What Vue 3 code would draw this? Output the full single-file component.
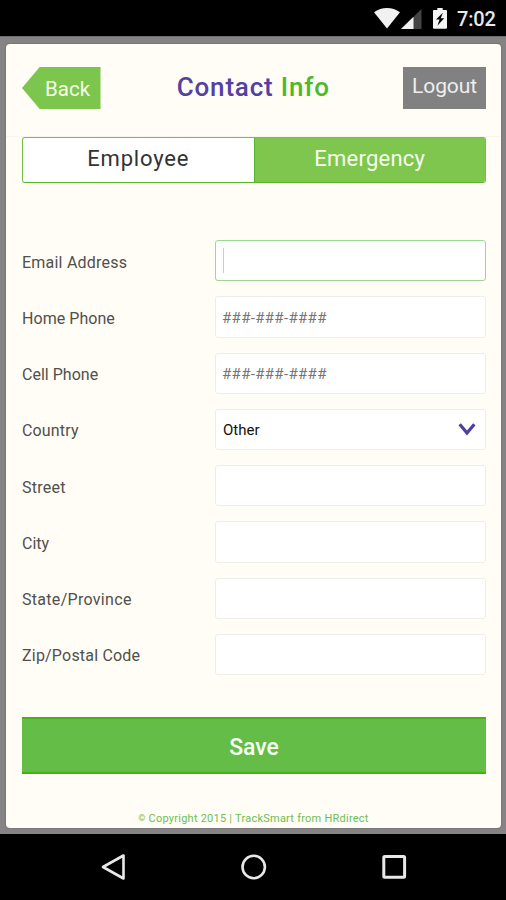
<script setup>
import { ref } from 'vue'

const fields = ref([
  { label: 'Email Address', ls: 0.22, focused: true },
  { label: 'Home Phone', ls: 0.05, mask: '###-###-####' },
  { label: 'Cell Phone', ls: 0.02, mask: '###-###-####' },
  { label: 'Country', ls: 0.15, value: 'Other' },
  { label: 'Street', ls: 0.25 },
  { label: 'City', ls: 0 },
  { label: 'State/Province', ls: 0.3 },
  { label: 'Zip/Postal Code', ls: 0.2 },
])
</script>

<template>
  <div class="screen">
    <div class="status">
      <svg class="wifi" width="26" height="21" viewBox="0 0 26 21"><path d="M0 4.3C7.5-1.4 18.500-1.400 26 4.300L13 20.500Z" fill="#f1f1f1" /></svg>
      <svg class="signal" width="21" height="20" viewBox="0 0 21 20"><path d="M20.500 0V20H0Z" fill="#444" /><path d="M12.500 7.800V20H0Z" fill="#f1f1f1" /></svg>
      <svg class="battery" width="14" height="21" viewBox="0 0 14 21"><path d="M4.300 0h5.400v2H13q1 0 1 1v16.800q0 1-1 1H1q-1 0-1-1V3q0-1 1-1h3.300Z" fill="#f4f4f4" /><path d="M9.800 4.800 3 11.500h3.600L4.400 17.800 11.200 10.200H7.800Z" fill="#000" /></svg>
      <span class="time">7:02</span>
    </div>
    <div class="backdrop">
      <main class="card">
        <header class="header">
          <button class="back"><span>Back</span></button>
          <h1 class="title"><span class="purple">Contact</span> Info</h1>
          <button class="logout"><span>Logout</span></button>
        </header>
        <div class="tabs">
          <div class="tab"><span>Employee</span></div>
          <div class="tab active"><span>Emergency</span></div>
        </div>
        <div class="form">
          <div v-for="f in fields" :key="f.label" class="row">
            <span class="label" :style="{ letterSpacing: f.ls + 'px' }">{{ f.label }}</span>
            <div class="input" :class="{ focused: f.focused }">
              <i v-if="f.focused" class="caret"></i>
              <span v-if="f.mask" class="mask">{{ f.mask }}</span>
              <template v-if="f.value">
                <span class="value">{{ f.value }}</span>
                <svg class="chevron" width="18" height="13" viewBox="0 0 18 13"><path d="M1.700 1.200 9 10l7.300-8.800" fill="none" stroke="#4f3fa0" stroke-width="3.200" /></svg>
              </template>
            </div>
          </div>
        </div>
        <button class="save">Save</button>
        <footer class="footer"><small class="copy">©</small> Copyright 2015 | TrackSmart from HRdirect</footer>
      </main>
    </div>
    <nav class="nav">
      <svg width="28" height="30" viewBox="0 0 28 30"><path d="M24.500 3.500V26.500L4 15Z" fill="none" stroke="#e8e8e8" stroke-width="2.600" stroke-linejoin="round" /></svg>
      <svg width="28" height="30" viewBox="0 0 28 30"><circle cx="13.700" cy="15" r="11.200" fill="none" stroke="#e8e8e8" stroke-width="2.600" /></svg>
      <svg width="28" height="30" viewBox="0 0 28 30"><rect x="3.800" y="4.600" width="20.800" height="20.600" rx="1" fill="none" stroke="#e8e8e8" stroke-width="3" /></svg>
    </nav>
  </div>
</template>

<style>
body { margin: 0; background: #000; }
</style>

<style scoped>
* { box-sizing: border-box; }
.screen { width: 506px; height: 900px; display: flex; flex-direction: column; background: #000; font-family: Roboto, "Noto Sans", sans-serif; overflow: hidden; }
button { border: 0; padding: 0; margin: 0; font-family: inherit; }
.status { height: 36px; display: flex; justify-content: flex-end; align-items: flex-start; padding: 8px 10px 0 0; }
.wifi { margin-right: 1px; }
.signal { margin: 1px 11px 0 0; }
.battery { margin-right: 10px; }
.time { width: 39px; font-size: 20px; line-height: 22px; font-weight: 500; color: #e8e8e8; white-space: nowrap; letter-spacing: -0.200px; }
.backdrop { height: 798px; background: #858384; padding: 7px 5px 6px 6px; border-top: 1px solid #6d6c6c; }
.card { height: 784px; background: #fffdf5; border-radius: 4px; display: flex; flex-direction: column; box-shadow: 0 0 2px #5c5c58; }
.header { height: 93px; flex: none; display: flex; align-items: flex-start; justify-content: space-between; padding: 23px 15px 0 16px; border-bottom: 1px solid #f7f5ed; }
.back { width: 78.500px; height: 42px; background: #7dc64d; clip-path: polygon(22.500% 0, 100% 0, 100% 100%, 22.500% 100%, 0 50%); color: #f5fcea; font-size: 20.500px; line-height: 44px; text-align: left; padding-left: 23px; }
.title { margin: 0; padding-left: 3px; font-size: 26px; line-height: 40px; font-weight: 500; letter-spacing: 0.800px; color: #4db929; white-space: nowrap; }
.purple { color: #5440a3; }
.logout { width: 83px; height: 42px; background: #818181; color: #eee; font-size: 21px; line-height: 36px; padding-bottom: 4px; white-space: nowrap; letter-spacing: -0.100px; }
.tabs { height: 46px; flex: none; margin: 0 15px 0 16px; display: flex; border: 1px solid #72c046; border-bottom-color: #5cb62c; border-radius: 3px; overflow: hidden; background: #fff; }
.tab { flex: 1; text-align: center; font-size: 22px; line-height: 42px; color: #333; letter-spacing: 0.800px; }
.active { background: #7fc64f; border-left: 1px solid #57b42a; color: #f7fdee; letter-spacing: 0.250px; line-height: 41px; }
.form { padding: 57px 15px 0 16px; display: flex; flex-direction: column; gap: 15px; }
.row { height: 41.250px; display: flex; align-items: center; }
.label { width: 193px; flex: none; font-size: 16px; line-height: 20px; padding-top: 4px; color: #50504d; white-space: nowrap; }
.input { width: 271px; height: 41.250px; border: 1px solid #eeeee9; border-radius: 3px; background: #fff; display: flex; align-items: center; padding: 0 9px 0 7px; }
.focused { border-color: #9bd891; }
.caret { width: 1px; height: 25px; background: #ccc; }
.mask { font-size: 15px; color: #747474; letter-spacing: 0.340px; padding-top: 2px; margin-left: -1px; }
.value { font-size: 15px; color: #111; padding-top: 2px; flex: 1; }
.save { height: 57px; flex: none; margin: 41.600px 15px 0 16px; background: #63bd46; border-top: 2px solid #4aaf1b; border-bottom: 2px solid #43b314; color: #f7fdf2; font-size: 23px; font-weight: 500; line-height: 54px; padding-top: 2px; }
.footer { margin-top: 37px; text-align: center; font-size: 11px; line-height: 15px; color: #6dbe57; letter-spacing: 0.240px; white-space: nowrap; }
.copy { font-size: 9px; vertical-align: 1px; }
.nav { height: 66px; display: flex; justify-content: space-between; align-items: center; padding: 0 98px 0 99px; }
</style>
